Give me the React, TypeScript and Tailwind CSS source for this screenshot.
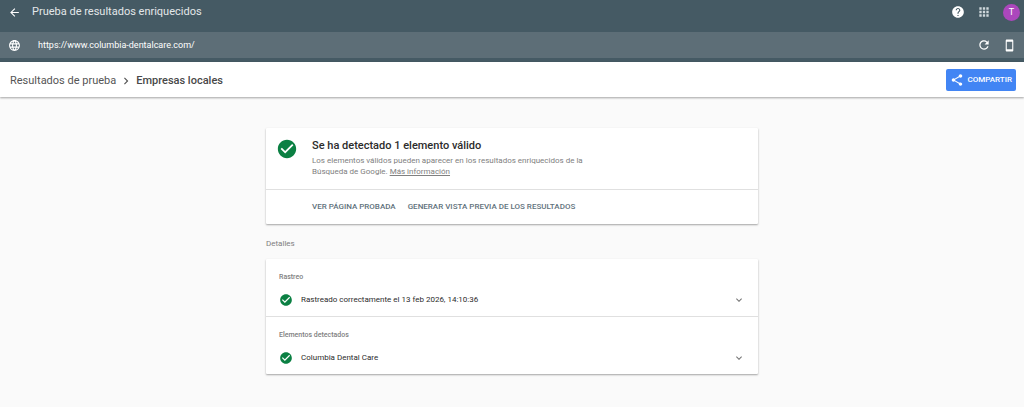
import { useState } from "react";
import type { ReactNode } from "react";
import {
  MdApps,
  MdArrowBack,
  MdCheckCircle,
  MdChevronRight,
  MdExpandMore,
  MdHelp,
  MdLanguage,
  MdRefresh,
  MdShare,
  MdStayCurrentPortrait,
} from "react-icons/md";

function IconButton({ label, children }: { label: string; children: ReactNode }) {
  return (
    <button type="button" aria-label={label} className="flex shrink-0 items-center justify-center">
      {children}
    </button>
  );
}

function DetailRow({ heading, text }: { heading: string; text: string }) {
  const [open, setOpen] = useState(false);
  return (
    <section className="px-[13px] pt-3 pb-[7px]">
      <h3 className="text-[7px] leading-3 font-medium text-[#808080]">{heading}</h3>
      <button
        type="button"
        aria-expanded={open}
        onClick={() => setOpen(!open)}
        className="mt-2 flex w-full items-center gap-2 py-px text-left text-[8px] leading-4 text-[#2c2c2c]"
      >
        <MdCheckCircle size={14} className="shrink-0 text-[#0b8043]" />
        <span className="flex-1">{text}</span>
        <MdExpandMore size={12} className="shrink-0 text-[#757575]" />
      </button>
    </section>
  );
}

export default function App() {
  return (
    <div className="flex min-h-screen flex-col bg-[#fafafa] font-['Roboto',sans-serif]">
      <header className="bg-[#455a64] pb-1 text-white">
        <div className="flex h-8 items-center pr-1 pb-2 pl-2">
          <IconButton label="Atrás">
            <MdArrowBack size={13} />
          </IconButton>
          <h1 className="ml-[11px] flex-1 text-[11px] leading-4 text-[#e3e7e9]">
            Prueba de resultados enriquecidos
          </h1>
          <div className="flex items-center gap-3">
            <IconButton label="Ayuda">
              <MdHelp size={14} />
            </IconButton>
            <IconButton label="Aplicaciones">
              <MdApps size={14} className="text-[#cfd8dc]" />
            </IconButton>
            <button
              type="button"
              aria-label="Cuenta"
              className="size-[17px] rounded-full bg-[#ab47bc] text-[9px] leading-[17px]"
            >
              T
            </button>
          </div>
        </div>
        <div className="flex h-[26px] items-center bg-[#5d6e77] px-2">
          <MdLanguage size={13} className="shrink-0" />
          <input
            type="url"
            aria-label="URL probada"
            defaultValue="https://www.columbia-dentalcare.com/"
            className="ml-[17px] min-w-0 flex-1 bg-transparent text-[9px] leading-4 outline-none"
          />
          <div className="flex items-center gap-3">
            <IconButton label="Volver a probar">
              <MdRefresh size={14} />
            </IconButton>
            <IconButton label="Smartphone">
              <MdStayCurrentPortrait size={13} />
            </IconButton>
          </div>
        </div>
      </header>

      <div className="flex h-[35px] items-center justify-between bg-white pr-2 pl-[10px] shadow-[0_1px_2px_rgba(0,0,0,0.35)]">
        <nav
          aria-label="Ruta"
          className="flex items-center gap-[3px] pt-[3px] text-[11px] leading-4 text-[#555555]"
        >
          <a href="#resultados">Resultados de prueba</a>
          <MdChevronRight size={14} />
          <span aria-current="page" className="font-medium text-[#484848]">
            Empresas locales
          </span>
        </nav>
        <button
          type="button"
          className="flex h-[22px] items-center gap-1 rounded-[2px] bg-[#4285f4] px-1 text-[8px] font-medium text-white"
        >
          <MdShare size={14} />
          COMPARTIR
        </button>
      </div>

      <main className="mx-auto w-full max-w-[492px] pt-[31px] pb-8">
        <section className="rounded-[1px] bg-white shadow-[0_1px_2px_rgba(0,0,0,0.35)]">
          <div className="flex gap-[14px] px-[10px] pt-[10px] pb-3">
            <MdCheckCircle size={22} className="shrink-0 text-[#0b8043]" />
            <div>
              <h2 className="text-[11px] leading-4 font-medium text-[#2c2c2c]">
                Se ha detectado 1 elemento válido
              </h2>
              <p className="mt-px max-w-72 text-[8px] leading-[11px] text-[#808080]">
                Los elementos válidos pueden aparecer en los resultados enriquecidos de la Búsqueda de
                Google.{" "}
                <a href="#informacion" className="underline">
                  Más información
                </a>
              </p>
            </div>
          </div>
          <div className="flex h-[35px] items-center gap-3 border-t border-[#e0e0e0] pl-[46px] text-[8px] font-medium text-[#5f727c]">
            <button type="button">VER PÁGINA PROBADA</button>
            <button type="button">GENERAR VISTA PREVIA DE LOS RESULTADOS</button>
          </div>
        </section>

        <h2 className="mt-[14px] text-[8px] leading-3 text-[#808080]">Detalles</h2>

        <div className="mt-[9px] divide-y divide-[#e0e0e0] rounded-[1px] bg-white shadow-[0_1px_2px_rgba(0,0,0,0.35)]">
          <DetailRow heading="Rastreo" text="Rastreado correctamente el 13 feb 2026, 14:10:36" />
          <DetailRow heading="Elementos detectados" text="Columbia Dental Care" />
        </div>
      </main>
    </div>
  );
}
